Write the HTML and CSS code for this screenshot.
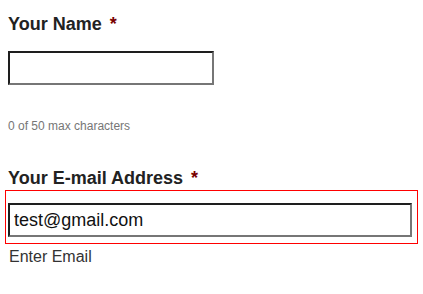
FILE: index.html
```html
<!DOCTYPE html>
<html>
<head>
<meta charset="utf-8">
<link rel="stylesheet" href="styles.css">
</head>
<body>
<form class="form">
  <div class="field field-name">
    <label class="label" for="name">Your Name<span class="req">*</span></label>
    <input class="input input-short" id="name" type="text">
    <div class="counter">0 of 50 max characters</div>
  </div>
  <div class="field field-email">
    <label class="label" for="email">Your E-mail Address<span class="req">*</span></label>
    <div class="error-box">
      <input class="input input-long" id="email" type="text" value="test@gmail.com">
    </div>
    <div class="help">Enter Email</div>
  </div>
</form>
</body>
</html>
```
FILE: styles.css
```css
html, body {
  margin: 0;
  padding: 0;
  background: #fff;
}
.form {
  display: flex;
  flex-direction: column;
  padding: 14px 0 0 8px;
  font-family: "Liberation Sans", Arial, sans-serif;
}
.field {
  display: flex;
  flex-direction: column;
  align-items: flex-start;
}
.label {
  font-size: 18px;
  font-weight: bold;
  line-height: 21px;
  color: #222;
}
.req {
  padding-left: 8px;
  color: #790000;
}
.input {
  box-sizing: border-box;
  height: 34px;
  margin: 0;
  padding: 0 4px;
  border-width: 2px;
  border-style: solid;
  border-color: #1e1e1e #767676 #767676 #1e1e1e;
  background: #fff;
  font-family: "Liberation Sans", Arial, sans-serif;
  font-size: 18px;
  color: #111;
  outline: none;
}
.input-short {
  width: 206px;
  margin-top: 16px;
}
.counter {
  margin-top: 34px;
  font-size: 12px;
  line-height: 14px;
  color: #767676;
}
.field-email {
  margin-top: 35px;
}
.error-box {
  box-sizing: border-box;
  width: 413px;
  margin: 1px 0 0 -3px;
  padding: 12px 4px 6px 2px;
  border: 1px solid #f00;
}
.input-long {
  display: block;
  width: 404px;
}
.help {
  margin-top: 4px;
  padding-left: 1px;
  font-size: 16px;
  line-height: 18px;
  color: #333;
}
```
